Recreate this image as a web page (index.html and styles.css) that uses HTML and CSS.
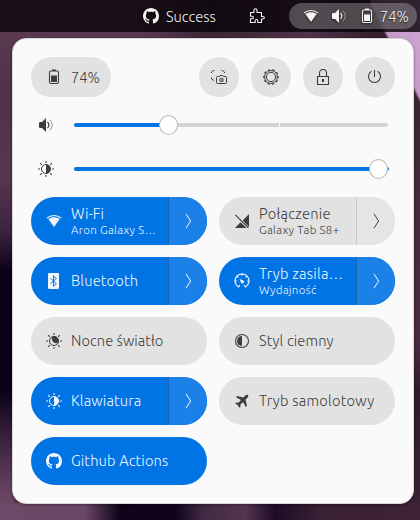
FILE: index.html
```html
<!DOCTYPE html>
<html lang="pl">
<head>
<meta charset="utf-8">
<title>Quick settings</title>
<link rel="stylesheet" href="styles.css">
</head>
<body>
<svg class="sprite" aria-hidden="true">
  <symbol id="github" viewBox="0 0 16 16"><path fill="currentColor" d="M8 0C3.58 0 0 3.58 0 8c0 3.54 2.29 6.53 5.47 7.59.4.07.55-.17.55-.38 0-.19-.01-.82-.01-1.49-2.01.37-2.53-.49-2.69-.94-.09-.23-.48-.94-.82-1.13-.28-.15-.68-.52-.01-.53.63-.01 1.08.58 1.23.82.72 1.21 1.87.87 2.33.66.07-.52.28-.87.51-1.07-1.78-.2-3.64-.89-3.64-3.95 0-.87.31-1.59.82-2.15-.08-.2-.36-1.02.08-2.12 0 0 .67-.21 2.2.82.64-.18 1.32-.27 2-.27s1.36.09 2 .27c1.53-1.04 2.2-.82 2.2-.82.44 1.1.16 1.92.08 2.12.51.56.82 1.27.82 2.15 0 3.07-1.87 3.75-3.65 3.95.29.25.54.73.54 1.48 0 1.07-.01 1.93-.01 2.2 0 .21.15.46.55.38A8.01 8.01 0 0 0 16 8c0-4.42-3.58-8-8-8z"/></symbol>
  <symbol id="puzzle" viewBox="0 0 16 16"><path fill="none" stroke="currentColor" stroke-width="1.1" stroke-linejoin="round" d="M1.500 4.500H5V2.600C5 .2 8 .2 8 2.600v1.900h4.500v4h1.200c2.200 0 2.200 2.500 0 2.500h-1.200v3.500H8.800v-1.700c0-1.800-2.600-1.800-2.600 0v1.700H1.500v-3.700H3c1.900 0 1.900-2.600 0-2.600H1.500z"/></symbol>
  <symbol id="wifi" viewBox="0 0 16 16"><path fill="none" stroke="currentColor" stroke-width="1.1" d="M.8 5.2C4.800 1.500 11.200 1.500 15.200 5.200"/><path fill="currentColor" d="M2.300 6.100C5.600 3.600 10.400 3.600 13.700 6.100L8 14z"/></symbol>
  <symbol id="volume" viewBox="0 0 16 16"><path fill="currentColor" d="M1 5.500 2 5h2l4-4v14l-4-4H2l-1-.5z"/><path fill="none" stroke="currentColor" stroke-width="1.200" d="M9.500 5q2.800 3 0 6"/><path fill="none" stroke="currentColor" opacity=".55" d="M12 2.800q4.600 5.200 0 10.400"/></symbol>
  <symbol id="battery" viewBox="0 0 16 16"><path fill="currentColor" d="M6 .5h4v1.500H6zM5 6.500h6V13H5z"/><rect x="3.500" y="2" width="9" height="12.500" rx="1.500" fill="none" stroke="currentColor" stroke-width="1.100"/></symbol>
  <symbol id="capture" viewBox="0 0 16 16"><g fill="none" stroke="currentColor"><path d="M.5 4V3L2.500 1.500h1M10.500 1.500h1L13.500 3v1M.5 8.500v1.500L3 11.500"/><path d="M6.500 7.500h2l.7-1h2.600l.7 1h2q1 0 1 1v5q0 1-1 1h-8q-1 0-1-1v-5q0-1 1-1z"/><circle cx="10.500" cy="11" r="1.800"/></g><circle cx="10.500" cy="11" r=".7" fill="currentColor"/></symbol>
  <symbol id="gear" viewBox="0 0 16 16"><g fill="none" stroke="currentColor"><circle cx="8" cy="8" r="4.600"/><circle cx="8" cy="8" r="6.400"/><circle cx="8" cy="8" r="7.200" stroke-width="1.300" stroke-dasharray="2.200 2.324" stroke-dashoffset="1.100"/></g></symbol>
  <symbol id="lock" viewBox="0 0 16 16"><path fill="none" stroke="currentColor" stroke-width="1.100" d="M2.500 7.500h11v8h-11zM4.500 7.500V4.200C4.500-.7 11.500-.7 11.500 4.200v3.300"/><path fill="currentColor" d="M7 10h2v3H7z"/></symbol>
  <symbol id="power" viewBox="0 0 16 16"><path fill="none" stroke="currentColor" stroke-width="1.100" d="M7.500 1v7M4.500 2.300a6 6 0 1 0 6 0"/></symbol>
  <symbol id="rays" viewBox="0 0 16 16"><path stroke="currentColor" stroke-width="1.100" d="m2.200 2.200 1.700 1.700m8.200 8.200 1.700 1.700m0-11.600-1.700 1.700m-8.200 8.200-1.700 1.700"/><path fill="currentColor" opacity=".65" d="M7.200 0h1.600v2H7.200zM7.200 14h1.600v2H7.200zM0 7.200h2v1.600H0zM14 7.200h2v1.600h-2z"/></symbol>
  <symbol id="bright" viewBox="0 0 16 16"><use href="#rays"/><circle cx="8" cy="8" r="4.500" fill="none" stroke="currentColor"/><path fill="currentColor" d="M8 3.500a4.500 4.500 0 0 1 0 9z"/></symbol>
  <symbol id="night" viewBox="0 0 16 16"><use href="#rays"/><circle cx="8" cy="8" r="4.500" fill="none" stroke="currentColor"/><path fill="currentColor" d="M6.500 3.500C9.500 2.300 13 4.500 12.600 8.500 12 10.500 9.500 10.800 7.500 9.200 5.600 7.500 5.400 5.200 6.500 3.500z"/></symbol>
  <symbol id="bluetooth" viewBox="0 0 16 16"><rect x="2" width="11" height="16" rx="1.300" fill="currentColor"/><path class="rune" fill="none" d="m4.500 5.300 5.800 5.200-2.800 2.800V2.700l2.800 2.800-5.800 5.200"/></symbol>
  <symbol id="nosignal" viewBox="0 0 16 16"><path fill="currentColor" d="M15 1v13L8.700 7.500zM6.500 9.200 12.500 15H1zM1 2.200l.8-.8 13 13-.8.8z"/></symbol>
  <symbol id="gauge" viewBox="0 0 16 16"><path fill="none" stroke="currentColor" stroke-width="1.200" d="M5.700 12 4.600 13.900A7 7 0 1 1 11.400 13.900L10.300 12M8 1v1.800M1 8h1.800M15 8h-1.800M3.200 3.200l1.200 1.200M12.800 3.200l-1.200 1.200"/><path fill="currentColor" d="M5.500 6 9 7.300C10.500 8.200 10.300 10.200 8.600 10.400 7.300 10.500 6.500 9.500 6.700 8.500z"/></symbol>
  <symbol id="contrast" viewBox="0 0 16 16"><circle cx="8" cy="8" r="6.500" fill="none" stroke="currentColor" stroke-width="1.100"/><path fill="currentColor" d="M8 3a5 5 0 0 0 0 10z"/></symbol>
  <symbol id="plane" viewBox="0 0 16 16"><path fill="currentColor" d="M14 2c-1-.7-2.200 0-3 .8L9.300 4.500 3.200 3 2 4.200l5 2.700L4.300 9.700 2.200 9.500 1.200 10.500l2.600 1.700 1.700 2.600 1-1-.2-2.100L9.100 9l2.700 5L13 12.800 11.500 6.700 13.200 5C14 4.200 14.700 3 14 2z"/></symbol>
  <symbol id="chevron" viewBox="0 0 16 16"><path fill="none" stroke="currentColor" d="m6 .8 4.600 7.200L6 15.200"/></symbol>
</svg>

<header class="topbar">
  <div class="status"><svg class="icon"><use href="#github"/></svg><span>Success</span></div>
  <svg class="icon puzzle"><use href="#puzzle"/></svg>
  <div class="indicators">
    <svg class="icon"><use href="#wifi"/></svg>
    <svg class="icon"><use href="#volume"/></svg>
    <svg class="icon"><use href="#battery"/></svg>
    <span>74%</span>
  </div>
</header>

<main class="panel">
  <div class="actions">
    <button class="battery"><svg class="icon"><use href="#battery"/></svg><span>74%</span></button>
    <button class="round"><svg class="icon"><use href="#capture"/></svg></button>
    <button class="round"><svg class="icon"><use href="#gear"/></svg></button>
    <button class="round"><svg class="icon"><use href="#lock"/></svg></button>
    <button class="round"><svg class="icon"><use href="#power"/></svg></button>
  </div>

  <div class="slider">
    <svg class="icon"><use href="#volume"/></svg>
    <div class="track"><div class="fill volume-fill"></div><div class="tick"></div><div class="knob volume-knob"></div></div>
  </div>
  <div class="slider">
    <svg class="icon"><use href="#bright"/></svg>
    <div class="track"><div class="fill light-fill"></div><div class="knob light-knob"></div></div>
  </div>

  <div class="tiles">
    <div class="tile on"><div class="main"><svg class="icon"><use href="#wifi"/></svg><div class="label"><span class="title">Wi-Fi</span><span class="sub">Aron Galaxy S…</span></div></div><div class="more"><svg class="icon"><use href="#chevron"/></svg></div></div>
    <div class="tile"><div class="main"><svg class="icon"><use href="#nosignal"/></svg><div class="label"><span class="title loose">Połączenie</span><span class="sub">Galaxy Tab S8+</span></div></div><div class="more"><svg class="icon"><use href="#chevron"/></svg></div></div>
    <div class="tile on"><div class="main"><svg class="icon"><use href="#bluetooth"/></svg><div class="label"><span class="title">Bluetooth</span></div></div><div class="more"><svg class="icon"><use href="#chevron"/></svg></div></div>
    <div class="tile on"><div class="main"><svg class="icon"><use href="#gauge"/></svg><div class="label"><span class="title loose">Tryb zasila…</span><span class="sub">Wydajność</span></div></div><div class="more"><svg class="icon"><use href="#chevron"/></svg></div></div>
    <div class="tile"><div class="main"><svg class="icon"><use href="#night"/></svg><div class="label"><span class="title tight">Nocne światło</span></div></div></div>
    <div class="tile"><div class="main"><svg class="icon"><use href="#contrast"/></svg><div class="label"><span class="title">Styl ciemny</span></div></div></div>
    <div class="tile on"><div class="main"><svg class="icon"><use href="#bright"/></svg><div class="label"><span class="title">Klawiatura</span></div></div><div class="more"><svg class="icon"><use href="#chevron"/></svg></div></div>
    <div class="tile"><div class="main"><svg class="icon"><use href="#plane"/></svg><div class="label"><span class="title loose">Tryb samolotowy</span></div></div></div>
    <div class="tile on"><div class="main"><svg class="icon"><use href="#github"/></svg><div class="label"><span class="title">Github Actions</span></div></div></div>
  </div>
</main>
</body>
</html>
```
FILE: styles.css
```css
* { box-sizing: border-box; }

body {
  margin: 0;
  width: 420px;
  height: 520px;
  overflow: hidden;
  font-family: Ubuntu, "Noto Sans", sans-serif;
  font-size: 14.67px;
  font-weight: 350;
  color: #3d3d3d;
  background:
    linear-gradient(63deg, transparent 49%, #c49bc6 52%, #d2a9d4 100%) 370px 0 / 50px 105px no-repeat,
    linear-gradient(90deg, #6c4966 0, #6a4766 85px, #0e0319 120px, #10041c 175px, #442b45 205px, #54354f 245px, #1d0c27 275px, #3a2034 320px, #3e2337 420px) 0 503px / 420px 17px no-repeat,
    linear-gradient(180deg, #593a50 32px, #50304a 95px, #573650 175px, #3e2440 230px, #0d0319 270px, #090216 390px, #321c38 430px, #65425f 490px, #6e4b6b 520px) 0 0 / 14px 520px no-repeat,
    linear-gradient(180deg, #4b3043 32px, #3c2532 110px, #43293a 190px, #4a2c43 340px, #321a2e 390px, #3b2135 520px) 410px 0 / 10px 520px no-repeat,
    linear-gradient(90deg, #5a3b52 0, #56374e 150px, #3b2534 210px, #4f3347 310px, #33202e 375px, #3c2636 420px);
}

.sprite { position: absolute; width: 0; height: 0; }
.icon { display: block; width: 16px; height: 16px; flex: none; overflow: visible; }
button { border: 0; padding: 0; font: inherit; color: inherit; }
span { white-space: nowrap; }

.topbar {
  display: flex;
  align-items: center;
  height: 32px;
  padding: 0 3px 0 143px;
  color: #f4f4f4;
  background: rgba(10, 5, 10, 0.82);
}
.topbar .icon { filter: drop-shadow(0 1px 1px rgba(0, 0, 0, 0.7)); }
.topbar span { text-shadow: 0 1px 1px rgba(0, 0, 0, 0.7); }
.status { display: flex; align-items: center; gap: 7px; width: 106px; }
.indicators {
  display: flex;
  align-items: center;
  width: 128px;
  height: 26px;
  margin-left: auto;
  padding-left: 14px;
  border-radius: 13px;
  background: rgba(255, 255, 255, 0.26);
}
.indicators .icon + .icon { margin-left: 12px; }
.indicators span { margin-left: 5px; }

.panel {
  width: 402px;
  height: 466px;
  margin: 6px 0 0 12px;
  padding: 18px;
  border: 1px solid #d9d6d9;
  border-radius: 14px;
  background: #fafafa;
  box-shadow: 0 1px 3px rgba(0, 0, 0, 0.35);
}

.actions { display: flex; gap: 12px; height: 40px; margin-bottom: 6px; }
.actions button { height: 40px; border-radius: 20px; background: #e2e2e2; }
.battery { display: flex; align-items: center; gap: 9px; width: 80px; margin-right: auto; }
.actions .battery { padding-left: 15px; }
.round { display: flex; align-items: center; justify-content: center; width: 40px; }

.slider { display: flex; align-items: center; height: 44px; padding-left: 7px; gap: 20px; }
.track { position: relative; width: 314px; height: 4px; border-radius: 2px; background: #d3d3d3; }
.fill { height: 4px; border-radius: 2px; background: #0073e5; }
.volume-fill { width: 94px; }
.light-fill { width: 315px; }
.tick { position: absolute; left: 205px; top: 0; width: 1px; height: 4px; background: #fafafa; }
.knob {
  position: absolute;
  top: -8px;
  width: 19px;
  height: 20px;
  border: 1px solid #b9b9b9;
  border-radius: 50%;
  background: #fff;
}
.volume-knob { left: 85px; }
.light-knob { left: 295px; }

.tiles {
  display: grid;
  grid-template-columns: 176px 176px;
  grid-auto-rows: 48px;
  gap: 12px;
  margin-top: 6px;
}
.tile { display: flex; overflow: hidden; border-radius: 24px; background: #e2e2e2; }
.main { display: flex; align-items: center; flex: 1; min-width: 0; padding-left: 15px; gap: 9px; }
.label { display: flex; flex-direction: column; }
.title { line-height: 18px; letter-spacing: 0.15px; }
.loose { letter-spacing: 0.25px; }
.tight { letter-spacing: 0.05px; }
.sub { font-size: 11.5px; line-height: 14px; letter-spacing: 0.33px; }
.more {
  display: flex;
  align-items: center;
  width: 39px;
  padding-left: 11px;
  border-left: 1px solid #c9c9c9;
  background: #e5e5e5;
}
.on { color: #f0f7ff; background: #0073e5; }
.on .more { background: #1b81e8; border-color: #1764b0; }
.rune { stroke: #0073e5; }
```
